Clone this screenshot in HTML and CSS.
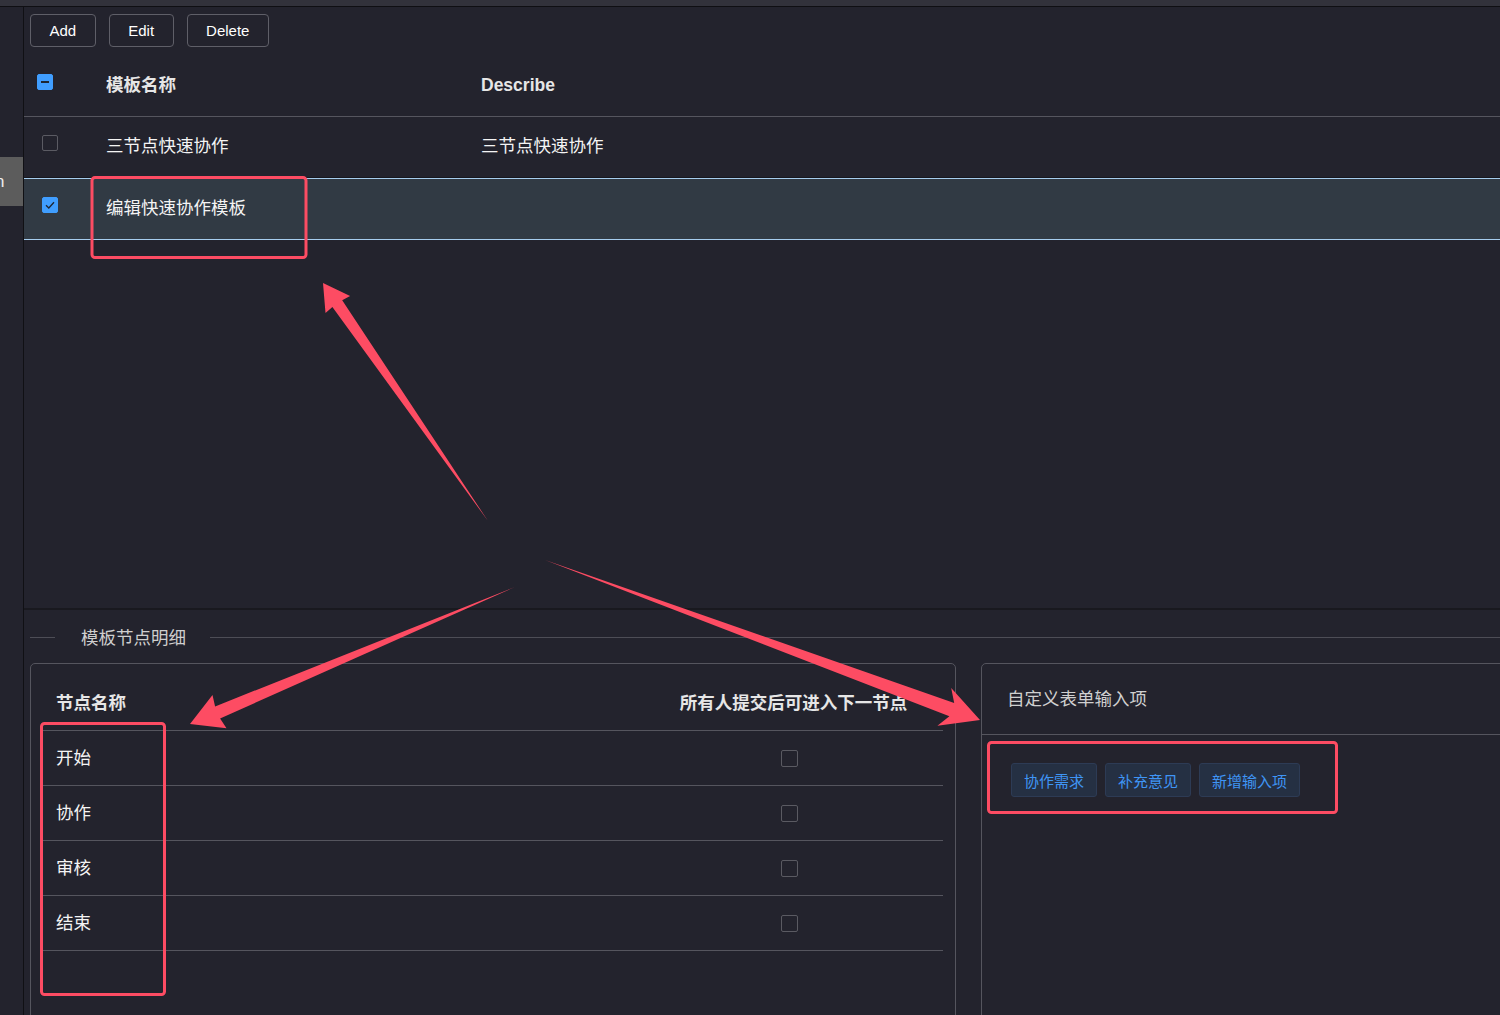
FILE: index.html
```html
<!DOCTYPE html>
<html lang="zh-CN">
<head>
<meta charset="utf-8">
<title>模板管理</title>
<link rel="stylesheet" href="styles.css">
</head>
<body>
<div class="topbar"></div>
<div class="app">
  <aside class="sidebar">
    <div class="side-tab">n</div>
  </aside>
  <main class="main">
    <div class="toolbar">
      <button class="btn">Add</button>
      <button class="btn">Edit</button>
      <button class="btn">Delete</button>
    </div>
    <div class="table">
      <div class="tr thead">
        <div class="c-check c-check-head">
          <span class="cb on"><svg width="16" height="16" viewBox="0 0 16 16"><line x1="4" y1="8" x2="12" y2="8" stroke="#1e2733" stroke-width="2"/></svg></span>
        </div>
        <div class="c-name txt-h">模板名称</div>
        <div class="c-desc txt-h">Describe</div>
      </div>
      <div class="tr row">
        <div class="c-check"><span class="cb"></span></div>
        <div class="c-name txt">三节点快速协作</div>
        <div class="c-desc txt">三节点快速协作</div>
      </div>
      <div class="tr row selected">
        <div class="c-check"><span class="cb on"><svg width="16" height="16" viewBox="0 0 16 16"><polyline points="4,8.2 6.8,11 12,5.2" fill="none" stroke="#1e2733" stroke-width="1.3"/></svg></span></div>
        <div class="c-name txt">编辑快速协作模板</div>
        <div class="c-desc txt"></div>
      </div>
    </div>
    <div class="spacer"></div>
    <section class="detail">
      <div class="divider"><span>模板节点明细</span></div>
      <div class="panels">
        <div class="panel panel-left">
          <div class="nt-head">
            <div class="nt-name">节点名称</div>
            <div class="nt-flag">所有人提交后可进入下一节点</div>
          </div>
          <div class="nt-row"><div class="nt-name">开始</div><div class="nt-flag"><span class="cb cb-lg"></span></div></div>
          <div class="nt-row"><div class="nt-name">协作</div><div class="nt-flag"><span class="cb cb-lg"></span></div></div>
          <div class="nt-row"><div class="nt-name">审核</div><div class="nt-flag"><span class="cb cb-lg"></span></div></div>
          <div class="nt-row"><div class="nt-name">结束</div><div class="nt-flag"><span class="cb cb-lg"></span></div></div>
        </div>
        <div class="panel panel-right">
          <div class="rp-head">自定义表单输入项</div>
          <div class="rp-body">
            <span class="tag">协作需求</span>
            <span class="tag">补充意见</span>
            <span class="tag">新增输入项</span>
          </div>
        </div>
      </div>
    </section>
  </main>
</div>
<svg class="annot" width="1500" height="1015" viewBox="0 0 1500 1015">
  <g fill="none" stroke="#fd4c63" stroke-width="3">
    <rect x="92" y="177.5" width="214" height="80" rx="3"/>
    <rect x="41.5" y="723.5" width="123" height="271" rx="3"/>
    <rect x="988.5" y="742.5" width="348" height="70" rx="3"/>
  </g>
  <g fill="#fd4c63">
    <polygon points="488,521 342.2,300.2 350.1,295.9 323,283 325.5,313 332.4,307"/>
    <polygon points="515,587 220.1,718.4 226.5,728.2 190,724 212.5,695 215.1,706.4"/>
    <polygon points="545,560 954.2,703 951.2,688.1 980,720 937.4,725.7 949.4,716.2"/>
  </g>
</svg>
</body>
</html>
```
FILE: styles.css
```css
* { box-sizing: border-box; }

body {
  margin: 0;
  width: 1500px;
  height: 1015px;
  overflow: hidden;
  position: relative;
  background: #23232d;
  color: #f2f2f2;
  font-family: "Liberation Sans", "Noto Sans CJK SC", sans-serif;
}

.topbar {
  height: 7px;
  background: #32323b;
  border-bottom: 1px solid #0f0f13;
}

.app {
  display: flex;
  height: 1008px;
}

.sidebar {
  width: 24px;
  flex: none;
  border-right: 1px solid #101014;
}

.side-tab {
  margin-top: 150px;
  height: 49px;
  background: #5c5c5c;
  color: #eeeeee;
  font-size: 17px;
  line-height: 49px;
  text-indent: -5px;
  overflow: hidden;
}

.main {
  flex: 1;
  min-width: 0;
  display: flex;
  flex-direction: column;
  overflow: hidden;
}

.toolbar {
  display: flex;
  gap: 13px;
  padding: 7px 0 0 6px;
}

.btn {
  height: 33px;
  padding: 0 18.5px;
  border: 1px solid #5f5f68;
  border-radius: 4px;
  background: transparent;
  color: #ffffff;
  font: 15px "Liberation Sans", sans-serif;
}

.tr {
  display: flex;
  align-items: center;
}

.thead {
  height: 70px;
  border-bottom: 1px solid #55555e;
}

.row {
  height: 61px;
  border-bottom: 1px solid #17171d;
}

.row.selected {
  height: 62px;
  background: #313a44;
  border-top: 1px solid #a6cdee;
  border-bottom: 1px solid #a6cdee;
}

.c-check {
  width: 82px;
  flex: none;
  display: flex;
  padding-left: 18px;
}

.c-check-head {
  padding-left: 13px;
}

.row .cb {
  margin-bottom: 9px;
}

.c-name {
  width: 375px;
  flex: none;
}

.c-desc {
  flex: 1;
}

.txt {
  font-size: 17.5px;
  line-height: 24px;
  color: #f4f4f4;
  margin-bottom: 3px;
}

.txt-h {
  font-size: 17.5px;
  line-height: 24px;
  font-weight: bold;
  color: #e6e6e6;
  margin-top: 6px;
}

.cb {
  width: 16px;
  height: 16px;
  border: 1px solid #5b5b63;
  border-radius: 2px;
  display: flex;
  align-items: center;
  justify-content: center;
}

.cb svg {
  display: block;
  flex: none;
}

.cb.on {
  background: #409eff;
  border-color: #409eff;
}

.cb-lg {
  width: 17px;
  height: 17px;
  border-radius: 2px;
  border-color: #5a5a62;
}

.spacer {
  flex: 1;
  border-bottom: 2px solid #19191f;
}

.detail {
  flex: none;
  height: 405px;
  padding: 15px 0 0 6px;
}

.divider {
  display: flex;
  align-items: center;
  height: 24px;
  font-size: 17.5px;
  color: #cfcfcf;
  font-family: "Noto Sans CJK SC", sans-serif;
}

.divider::before {
  content: "";
  width: 25px;
  border-top: 1px solid #4d4d56;
}

.divider span {
  padding: 0 24px 0 26px;
  line-height: 24px;
}

.divider::after {
  content: "";
  flex: 1;
  border-top: 1px solid #4d4d56;
}

.panels {
  display: grid;
  grid-template-columns: 926px 560px;
  gap: 25px;
  margin-top: 14px;
  height: 380px;
}

.panel {
  border: 1px solid #55555e;
  border-radius: 5px;
}

.panel-left {
  padding: 0 12px 0 11px;
}

.nt-head {
  height: 67px;
  display: flex;
  align-items: flex-end;
  padding-bottom: 15px;
  border-bottom: 1px solid #55555e;
  font-size: 17.5px;
  line-height: 24px;
  font-weight: bold;
  color: #e6e6e6;
}

.nt-row {
  height: 55px;
  display: flex;
  align-items: center;
  border-bottom: 1px solid #55555e;
  font-size: 17.5px;
  line-height: 24px;
  color: #f4f4f4;
}

.nt-name {
  width: 600px;
  flex: none;
  padding-left: 14px;
}

.nt-flag {
  flex: 1;
  display: flex;
  justify-content: center;
  padding-left: 2px;
}

.nt-row .nt-flag {
  padding: 0 6px 0 0;
}

.rp-head {
  height: 71px;
  display: flex;
  align-items: center;
  padding-left: 25px;
  border-bottom: 1px solid #55555e;
  font-size: 17.5px;
  line-height: 24px;
  color: #d0d0d0;
}

.rp-body {
  display: flex;
  gap: 8px;
  padding: 28px 0 0 29px;
}

.tag {
  height: 34px;
  padding: 0 12px;
  display: flex;
  align-items: center;
  border: 1px solid #2d3b55;
  border-radius: 3px;
  background: #253043;
  color: #3f95f5;
  font-size: 15px;
}

.annot {
  position: absolute;
  top: 0;
  left: 0;
  pointer-events: none;
}
```
